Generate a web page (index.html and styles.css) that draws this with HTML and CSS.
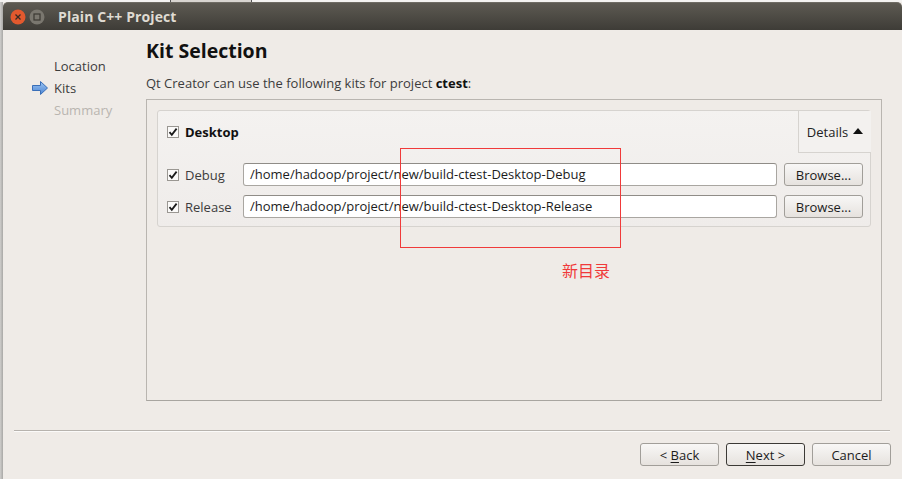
FILE: index.html
```html
<!DOCTYPE html>
<html>
<head>
<meta charset="utf-8">
<link rel="stylesheet" href="styles.css">
</head>
<body>
<div class="screen">
  <div class="topstrip"><span class="ghost"></span></div>
  <div class="row">
    <div class="shade"></div>
    <div class="window">
      <div class="titlebar">
        <span class="wbtn close">
          <svg width="16" height="16" viewBox="0 0 16 16"><circle cx="8" cy="8" r="7.5" fill="#e2592e"/><path d="M5.5 5.5l5 5M10.5 5.5l-5 5" stroke="#3b2a22" stroke-width="1.3"/></svg>
        </span>
        <span class="wbtn min">
          <svg width="16" height="16" viewBox="0 0 16 16"><circle cx="8" cy="8" r="7.5" fill="#7a776f"/><rect x="5" y="5" width="6" height="6" fill="none" stroke="#3b3933" stroke-width="1.2"/></svg>
        </span>
        <span class="title">Plain C++ Project</span>
      </div>
      <div class="content">
        <div class="top">
          <div class="nav">
            <div class="navitem">Location</div>
            <div class="navitem current">
              <svg class="arrow" width="16" height="14" viewBox="0 0 16 14"><defs><linearGradient id="ag" x1="0" y1="0" x2="0" y2="1"><stop offset="0" stop-color="#9cc4f2"/><stop offset="1" stop-color="#4d86d4"/></linearGradient></defs><path d="M0.5 4.5h8v-4l7 6.5-7 6.5v-4h-8z" fill="url(#ag)" stroke="#3a6fb8" stroke-width="1"/></svg>
              Kits
            </div>
            <div class="navitem future">Summary</div>
          </div>
          <div class="main">
            <h1 class="heading">Kit Selection</h1>
            <p class="intro">Qt Creator can use the following kits for project <b>ctest</b>:</p>
            <div class="panel">
              <div class="kit">
                <div class="kithead">
                  <label class="check bold"><span class="box"><svg width="10" height="10" viewBox="0 0 10 10"><path d="M1.5 5.2l2.3 2.6L8.6 1.6" fill="none" stroke="#1a1a1a" stroke-width="1.8"/></svg></span>Desktop</label>
                  <div class="details">Details <span class="tri"></span></div>
                </div>
                <div class="build">
                  <label class="check"><span class="box"><svg width="10" height="10" viewBox="0 0 10 10"><path d="M1.5 5.2l2.3 2.6L8.6 1.6" fill="none" stroke="#1a1a1a" stroke-width="1.8"/></svg></span>Debug</label>
                  <div class="field">/home/hadoop/project/new/build-ctest-Desktop-Debug</div>
                  <div class="btn">Browse...</div>
                </div>
                <div class="build">
                  <label class="check"><span class="box"><svg width="10" height="10" viewBox="0 0 10 10"><path d="M1.5 5.2l2.3 2.6L8.6 1.6" fill="none" stroke="#1a1a1a" stroke-width="1.8"/></svg></span>Release</label>
                  <div class="field">/home/hadoop/project/new/build-ctest-Desktop-Release</div>
                  <div class="btn">Browse...</div>
                </div>
              </div>
            </div>
          </div>
        </div>
        <div class="sep"></div>
        <div class="footer">
          <div class="btn fbtn"><span>&lt; <u>B</u>ack</span></div>
          <div class="btn fbtn default"><span><u>N</u>ext &gt;</span></div>
          <div class="btn fbtn"><span>Cancel</span></div>
        </div>
      </div>
    </div>
  </div>
  <div class="annot-box"></div>
  <div class="annot-text">新目录</div>
</div>
</body>
</html>
```
FILE: styles.css
```css
html, body {
  margin: 0;
  padding: 0;
}
body {
  width: 902px;
  height: 479px;
  overflow: hidden;
  background: #f2f1ef;
  font-family: "Open Sans", "Noto Sans", "DejaVu Sans", "Noto Sans CJK SC", sans-serif;
  font-size: 13px;
  color: #3c3c3c;
}
.screen {
  position: relative;
  width: 902px;
  height: 479px;
  display: flex;
  flex-direction: column;
}
.topstrip {
  height: 2px;
  background: #f4f3f1;
  position: relative;
}
.ghost {
  position: absolute;
  left: 170px;
  width: 80px;
  top: 0;
  height: 2px;
  background: #d8d5d0;
  border-left: 1px solid #555;
  border-right: 1px solid #555;
}
.row {
  flex: 1;
  display: flex;
}
.shade {
  width: 3px;
  background: linear-gradient(to right, #cfcecc, #a9a8a6);
}
.window {
  flex: 1;
  display: flex;
  flex-direction: column;
  background: #efebe7;
}
.titlebar {
  height: 28px;
  border-radius: 5px 5px 0 0;
  background: linear-gradient(to bottom, #5d5a52, #3e3c37);
  border-top: 1px solid #6f6c64;
  box-sizing: border-box;
  display: flex;
  align-items: center;
  padding-left: 7px;
}
.wbtn {
  width: 16px;
  height: 16px;
  display: block;
  margin-right: 3px;
}
.wbtn svg { display: block; }
.title {
  margin-left: 10px;
  color: #dfdbd2;
  font-family: "Open Sans", "Noto Sans", sans-serif;
  font-weight: 700;
  font-size: 14px;
  letter-spacing: 0.1px;
}
.content {
  flex: 1;
  display: flex;
  flex-direction: column;
}
.top {
  display: flex;
  height: 371px;
}
.nav {
  width: 143px;
  padding-top: 25px;
  box-sizing: border-box;
}
.navitem {
  position: relative;
  padding-left: 51px;
  height: 22px;
  line-height: 22px;
  color: #3c3c3c;
}
.navitem.future { color: #b9b5b0; }
.arrow {
  position: absolute;
  left: 29px;
  top: 4px;
}
.main {
  width: 736px;
  display: flex;
  flex-direction: column;
}
.heading {
  margin: 9px 0 0 0;
  font-size: 19.5px;
  font-weight: 700;
  color: #111;
  height: 24px;
  line-height: 24px;
}
.intro {
  margin: 11px 0 0 0;
  height: 18px;
  line-height: 18px;
  color: #3c3c3c;
}
.intro b { color: #111; }
.panel {
  margin-top: 7px;
  flex: 1;
  border: 1px solid #b9b5b0;
  border-bottom-color: #a8a5a0;
  padding: 10px 10px;
  background: #efebe7;
}
.kit {
  height: 117px;
  box-sizing: border-box;
  border: 1px solid #d6d3cf;
  border-radius: 3px;
  background: linear-gradient(to bottom, #f4f2f0, #efecea);
  padding: 0 7px 0 9px;
}
.kithead {
  height: 42px;
  display: flex;
  align-items: center;
  margin-right: -8px;
}
.check {
  display: flex;
  align-items: center;
  color: #3c3c3c;
}
.check.bold { font-weight: 700; color: #111; }
.box {
  width: 12px;
  height: 12px;
  box-sizing: border-box;
  border: 1px solid #9a9792;
  background: #fbfaf9;
  display: flex;
  align-items: center;
  justify-content: center;
  margin-right: 6px;
}
.box svg { display: block; }
.details {
  margin-left: auto;
  width: 73px;
  height: 42px;
  box-sizing: border-box;
  border-left: 1px solid #d6d3cf;
  border-bottom: 1px solid #d6d3cf;
  display: flex;
  align-items: center;
  justify-content: center;
  color: #222;
  background: #f3f1ef;
}
.tri {
  display: inline-block;
  width: 0;
  height: 0;
  border-left: 5px solid transparent;
  border-right: 5px solid transparent;
  border-bottom: 6px solid #111;
  margin-left: 5px;
  margin-bottom: 2px;
}
.build {
  display: flex;
  align-items: center;
  height: 23px;
  margin-top: 9px;
}
.build:nth-child(2) { margin-top: 10px; }
.build .check { width: 76px; }
.field {
  width: 534px;
  height: 23px;
  box-sizing: border-box;
  border: 1px solid #a9a6a1;
  border-top-color: #8f8c87;
  border-radius: 3px;
  background: #fff;
  padding-left: 6px;
  line-height: 21px;
  color: #1c1c1c;
}
.btn {
  height: 23px;
  box-sizing: border-box;
  border: 1px solid #a19e99;
  border-radius: 3px;
  background: linear-gradient(to bottom, #f8f7f6, #e6e2de);
  display: flex;
  align-items: center;
  justify-content: center;
  color: #1c1c1c;
}
.build .btn {
  width: 79px;
  margin-left: 7px;
}
.sep {
  margin: 29px 12px 0 11px;
  border-top: 1px solid #b7b3ae;
  border-bottom: 1px solid #fbfaf9;
  height: 0;
}
.footer {
  display: flex;
  justify-content: flex-end;
  gap: 7px;
  padding-right: 11px;
  margin-top: 11px;
}
.fbtn { width: 79px; }
.fbtn.default { border-color: #3c3a36; }
.fbtn u { text-decoration: underline; text-underline-offset: 2px; }
.annot-box {
  position: absolute;
  left: 400px;
  top: 148px;
  width: 221px;
  height: 100px;
  box-sizing: border-box;
  border: 1px solid #f03a3a;
}
.annot-text {
  position: absolute;
  left: 562px;
  top: 258px;
  font-family: "Noto Sans CJK SC", sans-serif;
  font-size: 16px;
  color: #f03a3a;
}
```
